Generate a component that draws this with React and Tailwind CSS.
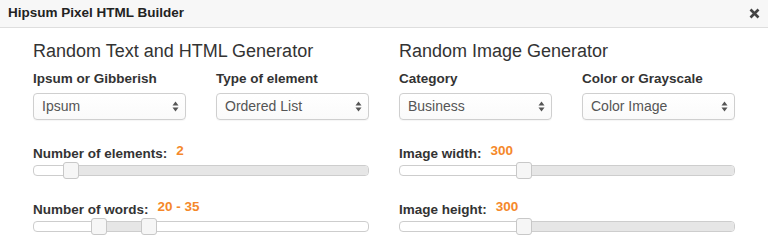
import React from "react";

const font = { fontFamily: '"Liberation Sans", Arial, sans-serif' };

const Select = ({ value }) => (
  <div className="h-[27px] border border-[#cfcfcf] rounded-[4px] bg-gradient-to-b from-white to-[#fafafa] flex items-center justify-between pl-[8px] pr-[6px] shadow-[0_1px_1px_rgba(0,0,0,0.04)]">
    <span className="text-[14px] text-[#555]">{value}</span>
    <svg width="7" height="11" viewBox="0 0 7 11">
      <path d="M3.5 0.5 L6.5 4.5 L0.5 4.5 Z" fill="#555" />
      <path d="M3.5 10.5 L6.5 6.5 L0.5 6.5 Z" fill="#555" />
    </svg>
  </div>
);

const Field = ({ label, value }) => (
  <div>
    <div className="text-[13.5px] font-bold text-[#333] leading-[16px] mb-[6px]">{label}</div>
    <Select value={value} />
  </div>
);

// thumbs: left offsets in px inside the track; fill: [from, to] px of the gray part
const Slider = ({ label, value, thumbs, fill }) => (
  <div>
    <div className="text-[13.5px] leading-[16px] text-[#333] mb-[3px] whitespace-nowrap">
      <span className="font-bold">{label}</span>
      <span className="relative -top-[3px] ml-[9px] font-bold text-[#f5882a]">{value}</span>
    </div>
    <div className="relative h-[11px] rounded-[4px] border border-[#cdcdcd] bg-white">
      <div
        className="absolute top-0 bottom-0 bg-[#e6e6e6] rounded-r-[3px]"
        style={{ left: fill[0], width: fill[1] - fill[0] }}
      />
      {thumbs.map((t) => (
        <div
          key={t}
          className="absolute top-[-4px] w-[16px] h-[17px] rounded-[3px] border border-[#c8c8c8] bg-[#f6f6f6]"
          style={{ left: t }}
        />
      ))}
    </div>
  </div>
);

const Column = ({ title, fields, sliders }) => (
  <div>
    <h2 className="text-[18px] leading-[22px] text-[#333] mt-[12px]">{title}</h2>
    <div className="grid grid-cols-2 gap-[30px] mt-[9px]">
      {fields.map((f) => (
        <Field key={f.label} {...f} />
      ))}
    </div>
    <div className="mt-[26px] flex flex-col gap-[26px]">
      {sliders.map((s) => (
        <Slider key={s.label} {...s} />
      ))}
    </div>
  </div>
);

export default function App() {
  return (
    <div className="w-[768px] h-[249px] bg-white overflow-hidden" style={font}>
      <div className="h-[28px] bg-[#f7f7f7] border-b border-[#dedede] flex items-center justify-between pl-[8px] pr-[8px]">
        <span className="text-[13.5px] font-bold text-[#222]">Hipsum Pixel HTML Builder</span>
        <svg width="11" height="11" viewBox="0 0 11 11">
          <path d="M1.5 1.5 L9.5 9.5 M9.5 1.5 L1.5 9.5" stroke="#444" strokeWidth="2.6" />
        </svg>
      </div>
      <div className="grid grid-cols-2 gap-[30px] px-[33px]">
        <Column
          title="Random Text and HTML Generator"
          fields={[
            { label: "Ipsum or Gibberish", value: "Ipsum" },
            { label: "Type of element", value: "Ordered List" },
          ]}
          sliders={[
            { label: "Number of elements:", value: "2", thumbs: [29], fill: [37, 334] },
            { label: "Number of words:", value: "20 - 35", thumbs: [57, 107], fill: [65, 115] },
          ]}
        />
        <Column
          title="Random Image Generator"
          fields={[
            { label: "Category", value: "Business" },
            { label: "Color or Grayscale", value: "Color Image" },
          ]}
          sliders={[
            { label: "Image width:", value: "300", thumbs: [116], fill: [124, 334] },
            { label: "Image height:", value: "300", thumbs: [116], fill: [124, 334] },
          ]}
        />
      </div>
    </div>
  );
}
